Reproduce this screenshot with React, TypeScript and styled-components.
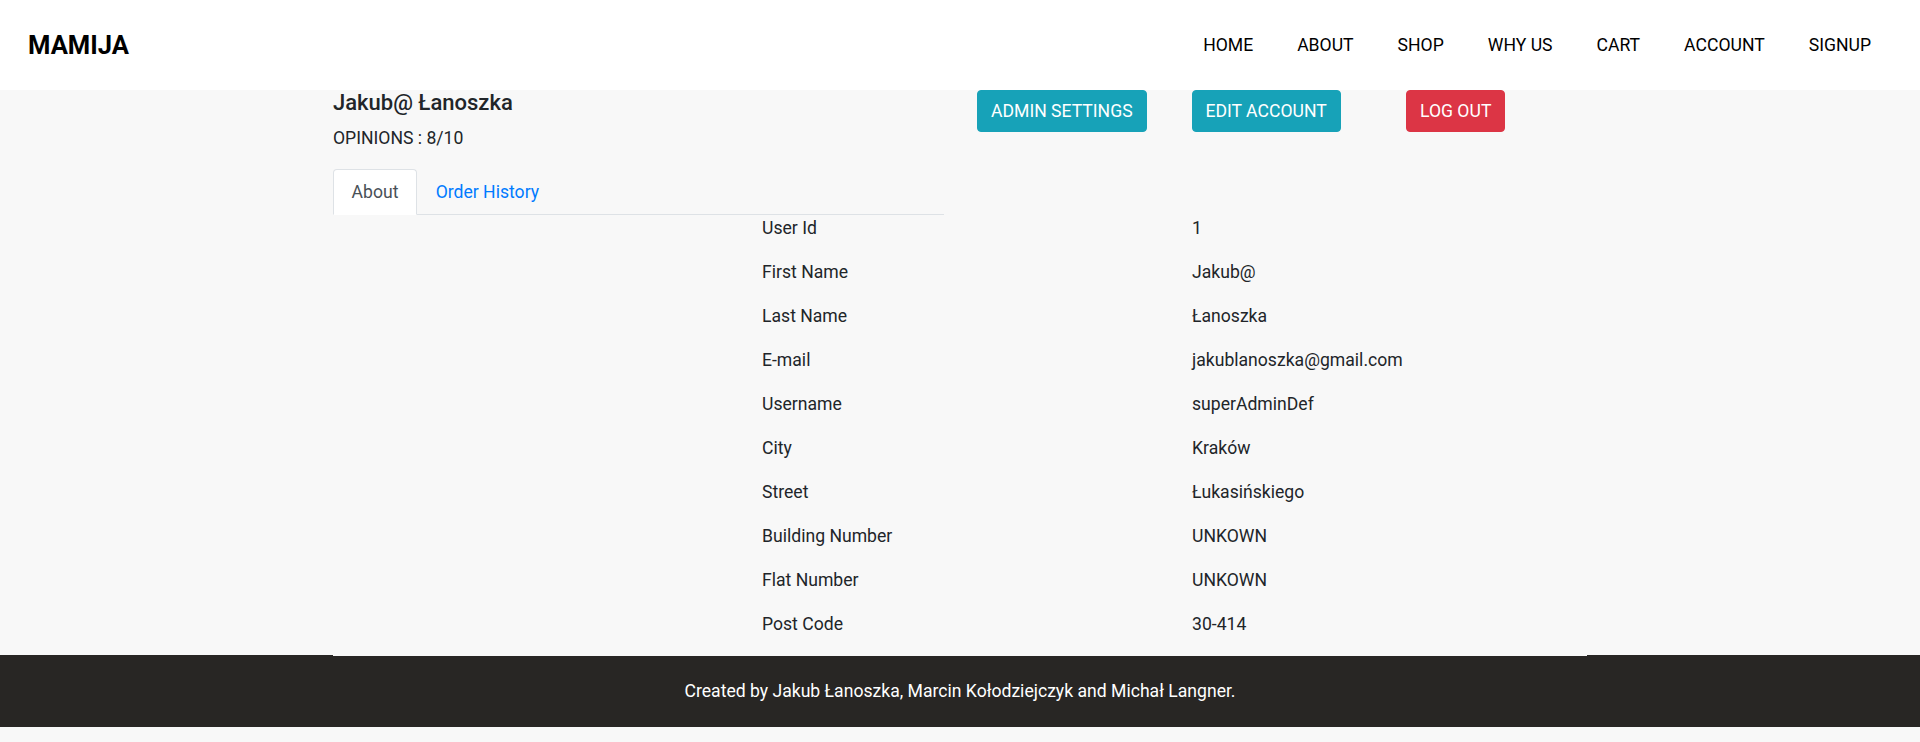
import React from "react";
import styled, { createGlobalStyle } from "styled-components";

const GlobalStyle = createGlobalStyle`
  html, body {
    margin: 0;
    padding: 0;
    background: #f8f8f8;
    font-family: Roboto, "Liberation Sans", Arial, sans-serif;
    font-size: 17.6px;
    color: #212529;
  }
  * { box-sizing: border-box; }
`;

const Header = styled.header`
  height: 90px;
  background: #ffffff;
  display: flex;
  align-items: center;
  justify-content: space-between;
  padding: 0 49px 0 28px;
`;

const Logo = styled.a`
  font-size: 25.6px;
  font-weight: 700;
  color: #000;
  text-decoration: none;
  line-height: 1.2;
`;

const Nav = styled.nav`
  display: flex;
  gap: 44px;
`;

const NavLink = styled.a`
  font-size: 17.6px;
  line-height: 1.5;
  color: #000;
  text-decoration: none;
  text-transform: uppercase;
`;

const Container = styled.main`
  width: 1254px;
  margin: 0 auto -1px;
  padding-bottom: 1px;
  background: #f8f8f8;
  position: relative;
  z-index: 1;
`;

const TopRow = styled.div`
  display: grid;
  grid-template-columns: 611px 1fr;
  column-gap: 33px;
`;

const ProfileHead = styled.div`
  display: flex;
  flex-direction: column;
`;

const Name = styled.h5`
  margin: 0;
  font-size: 22px;
  font-weight: 500;
  line-height: 1.2;
  color: #212529;
`;

const Opinions = styled.div`
  margin-top: 8.8px;
  font-size: 17.6px;
  line-height: 1.5;
`;

const Tabs = styled.ul`
  list-style: none;
  margin: 17.6px 0 0;
  padding: 0;
  display: flex;
  border-bottom: 1px solid #dee2e6;
`;

const TabItem = styled.li`
  margin-bottom: -1px;
`;

const TabLink = styled.a<{ $active?: boolean }>`
  display: block;
  padding: 8.8px 17.6px;
  font-size: 17.6px;
  line-height: 1.5;
  text-decoration: none;
  border-width: 1px;
  border-style: solid;
  border-color: ${(p) => (p.$active ? "#dee2e6 #dee2e6 #ffffff" : "transparent")};
  border-top-left-radius: 4px;
  border-top-right-radius: 4px;
  background: ${(p) => (p.$active ? "#ffffff" : "transparent")};
  color: ${(p) => (p.$active ? "#495057" : "#007bff")};
`;

const Actions = styled.div`
  display: grid;
  grid-template-columns: repeat(3, 214.5px);
  align-items: start;
`;

const Button = styled.button<{ $variant: "info" | "danger" }>`
  justify-self: start;
  font-family: inherit;
  font-size: 17.6px;
  line-height: 1.5;
  padding: 6.8px 13px;
  border: 1px solid ${(p) => (p.$variant === "info" ? "#17a2b8" : "#dc3545")};
  border-radius: 4px;
  background: ${(p) => (p.$variant === "info" ? "#17a2b8" : "#dc3545")};
  color: #ffffff;
  text-transform: uppercase;
  cursor: pointer;
`;

const InfoGrid = styled.div`
  margin-left: 429px;
  display: grid;
  grid-template-columns: 430px 1fr;
`;

const Cell = styled.p`
  margin: 0 0 17.6px;
  font-size: 17.6px;
  line-height: 1.5;
  color: #212529;
`;

const Footer = styled.footer`
  height: 72px;
  background: #282624;
  color: #ffffff;
  display: flex;
  align-items: center;
  justify-content: center;
  font-size: 17.6px;
  line-height: 1.5;
`;

const navItems = ["Home", "About", "Shop", "Why us", "Cart", "Account", "Signup"];

const info: [string, string][] = [
  ["User Id", "1"],
  ["First Name", "Jakub@"],
  ["Last Name", "Łanoszka"],
  ["E-mail", "jakublanoszka@gmail.com"],
  ["Username", "superAdminDef"],
  ["City", "Kraków"],
  ["Street", "Łukasińskiego"],
  ["Building Number", "UNKOWN"],
  ["Flat Number", "UNKOWN"],
  ["Post Code", "30-414"],
];

export default function App() {
  return (
    <>
      <GlobalStyle />
      <Header>
        <Logo href="#">MAMIJA</Logo>
        <Nav>
          {navItems.map((n) => (
            <NavLink key={n} href="#">
              {n}
            </NavLink>
          ))}
        </Nav>
      </Header>
      <Container>
        <TopRow>
          <ProfileHead>
            <Name>Jakub@ Łanoszka</Name>
            <Opinions>OPINIONS : 8/10</Opinions>
            <Tabs>
              <TabItem>
                <TabLink href="#" $active>
                  About
                </TabLink>
              </TabItem>
              <TabItem>
                <TabLink href="#">Order History</TabLink>
              </TabItem>
            </Tabs>
          </ProfileHead>
          <Actions>
            <Button $variant="info">Admin Settings</Button>
            <Button $variant="info">Edit Account</Button>
            <Button $variant="danger">Log out</Button>
          </Actions>
        </TopRow>
        <InfoGrid>
          {info.map(([k, v]) => (
            <React.Fragment key={k}>
              <Cell>{k}</Cell>
              <Cell>{v}</Cell>
            </React.Fragment>
          ))}
        </InfoGrid>
      </Container>
      <Footer>Created by Jakub Łanoszka, Marcin Kołodziejczyk and Michał Langner.</Footer>
    </>
  );
}
